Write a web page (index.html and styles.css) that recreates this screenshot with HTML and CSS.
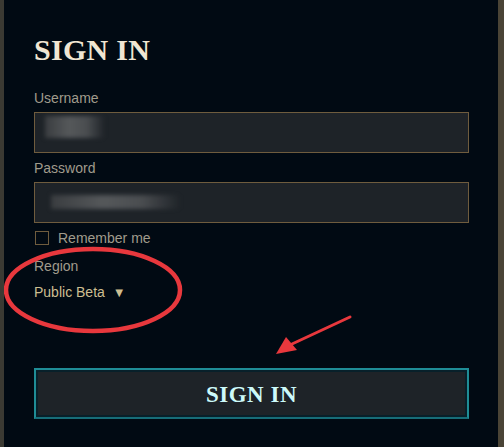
FILE: index.html
```html
<!DOCTYPE html>
<html lang="en">
<head>
  <meta charset="UTF-8" />
  <title>Sign In</title>
  <link rel="stylesheet" href="styles.css">
</head>
<body>
  <div class="frame">
    <div class="panel">
      <h1 class="title">SIGN IN</h1>

      <label class="label">Username</label>
      <div class="field">
        <span class="smudge smudge-user"></span>
      </div>

      <label class="label">Password</label>
      <div class="field">
        <span class="smudge smudge-pass"></span>
      </div>

      <div class="remember">
        <span class="check"></span>
        <span>Remember me</span>
      </div>

      <div class="label region-label">Region</div>
      <div class="region">Public Beta <span class="caret">&#9660;</span></div>

      <button class="submit">SIGN IN</button>
    </div>

    <svg class="marks" width="504" height="447" viewBox="0 0 504 447">
      <ellipse cx="93" cy="290" rx="87" ry="41" fill="none" stroke="#e8383d" stroke-width="4.5"/>
      <path d="M350 317 L292 344" stroke="#e8383d" stroke-width="3" stroke-linecap="round"/>
      <path d="M276 354 L286 337 L297 350 Z" fill="#e8383d"/>
    </svg>
  </div>
</body>
</html>
```

FILE: styles.css
```css
body {
  margin: 0;
  background-color: #010a13;
  font-family: "Liberation Sans", Arial, sans-serif;
}

.frame {
  position: relative;
  height: 447px;
  border-left: 4px solid #3b3a33;
  border-right: 6px solid #4a4436;
  box-sizing: border-box;
  overflow: hidden;
}

.panel {
  padding: 36px 29px 0 30px;
  display: flex;
  flex-direction: column;
}

.title {
  margin: 0 0 25px 0;
  font-family: "Liberation Serif", "Times New Roman", serif;
  font-weight: bold;
  font-size: 30px;
  line-height: 28px;
  letter-spacing: 0.3px;
  color: #f0e6d2;
}

.label {
  font-size: 14px;
  line-height: 18px;
  color: #a09b8c;
  margin-bottom: 5px;
}

.field {
  position: relative;
  height: 41px;
  box-sizing: border-box;
  border: 1px solid #6f5c3e;
  background-color: #1e2328;
  margin-bottom: 6px;
}

.smudge {
  position: absolute;
  background: linear-gradient(90deg, #3a3d40, #55585a 40%, #4a4d50 70%, rgba(40, 44, 48, 0));
  filter: blur(2px);
}

.smudge-user {
  left: 10px;
  top: 3px;
  width: 60px;
  height: 22px;
}

.smudge-pass {
  left: 16px;
  top: 12px;
  width: 130px;
  height: 14px;
}

.remember {
  display: flex;
  align-items: center;
  gap: 9px;
  font-size: 14px;
  color: #a09b8c;
  margin: 1px 0 11px 1px;
}

.check {
  width: 12px;
  height: 12px;
  border: 1.5px solid #6f5c3e;
}

.region-label {
  margin-bottom: 9px;
}

.region {
  font-size: 14px;
  color: #cdbe91;
  margin-bottom: 68px;
}

.caret {
  font-size: 13px;
  margin-left: 4px;
}

.submit {
  height: 51px;
  padding-top: 3px;
  border: 2px solid #1f8d96;
  border-bottom-color: #176d78;
  box-shadow: inset 0 0 0 2px #08202a;
  background-color: #1e2328;
  color: #cdfafa;
  font-family: "Liberation Serif", "Times New Roman", serif;
  font-weight: bold;
  font-size: 23px;
  letter-spacing: 0.5px;
  cursor: pointer;
}

.marks {
  position: absolute;
  left: -4px;
  top: 0;
  pointer-events: none;
}
```
